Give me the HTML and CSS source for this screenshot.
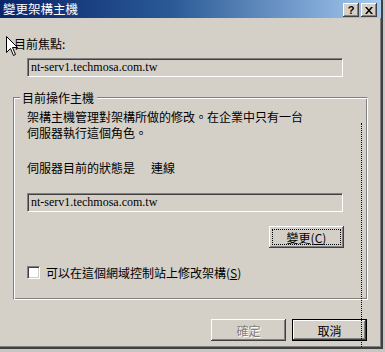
FILE: index.html
```html
<!DOCTYPE html>
<html lang="zh-Hant">
<head>
<meta charset="utf-8">
<link rel="stylesheet" href="styles.css">
</head>
<body>
<div class="window">
  <div class="titlebar">
    <span class="title">變更架構主機</span>
    <div class="tb-buttons">
      <span class="tbtn help">?</span>
      <span class="tbtn close"><svg width="8" height="7" viewBox="0 0 8 7"><path d="M0 0h2l2 2.5L6 0h2L5 3.5 8 7H6L4 4.5 2 7H0l3-3.5z" fill="#000"/></svg></span>
    </div>
  </div>
  <div class="content">
    <div class="label">目前焦點:</div>
    <div class="field">nt-serv1.techmosa.com.tw</div>
    <div class="group">
      <div class="legend">目前操作主機</div>
      <p class="desc">架構主機管理對架構所做的修改。在企業中只有一台<br>伺服器執行這個角色。</p>
      <div class="status"><span class="status-label">伺服器目前的狀態是</span><span>連線</span></div>
      <div class="field">nt-serv1.techmosa.com.tw</div>
      <div class="row-right"><span class="btn focus"><span class="focus-ring">變更(<u>C</u>)</span></span></div>
      <div class="check"><span class="box"></span><span>可以在這個網域控制站上修改架構(<u>S</u>)</span></div>
    </div>
    <div class="actions">
      <span class="btn disabled">確定</span>
      <span class="btn default">取消</span>
    </div>
  </div>
  <div class="dotline"></div>
  <svg class="cursor" width="13" height="20" viewBox="0 0 13 20"><path d="M0.5 0.5V16.5L4.5 12.5L7.5 19.5L9.5 18.5L6.5 11.5H11.5Z" fill="#fff" stroke="#000" stroke-width="1"/></svg>
</div>
</body>
</html>
```
FILE: styles.css
```css
html, body {
  margin: 0;
  padding: 0;
  background: #c8c6c0;
}
body {
  font-family: "Noto Sans CJK TC", "Noto Sans", sans-serif;
  font-size: 12px;
  line-height: 15px;
  color: #000;
}
.window {
  position: relative;
  width: 381px;
  height: 347px;
  background: #d4d0c8;
  border-right: 2px solid #404040;
  border-bottom: 2px solid #404040;
  box-shadow: inset -1px -1px #808080;
  overflow: hidden;
}
.titlebar {
  height: 18px;
  background: linear-gradient(to right, #0a246a 0%, #2a5a96 45%, #a6caf0 100%);
  display: flex;
  align-items: center;
  justify-content: space-between;
  padding: 0 4px 0 3px;
}
.title {
  color: #fff;
  font-size: 12.5px;
  line-height: 14px;
}
.tb-buttons {
  display: flex;
  gap: 2px;
  margin-top: 2px;
}
.tbtn {
  width: 16px;
  height: 14px;
  box-sizing: border-box;
  background: #d4d0c8;
  box-shadow: inset -1px -1px #404040, inset 1px 1px #fff, inset -2px -2px #808080;
  display: flex;
  align-items: center;
  justify-content: center;
  font-family: "Liberation Sans", sans-serif;
  font-weight: bold;
  font-size: 11px;
  line-height: 11px;
}
.content {
  padding: 18px 0 0 0;
}
.label {
  margin-left: 14px;
}
.field {
  margin: 7px 0 0 27px;
  width: 316px;
  height: 19px;
  box-sizing: border-box;
  border: 1px solid;
  border-color: #808080 #fff #fff #808080;
  box-shadow: inset 1px 1px #404040, inset -1px -1px #d4d0c8;
  font-family: "Liberation Serif", serif;
  font-size: 12px;
  line-height: 17px;
  padding-left: 3px;
}
.group {
  position: relative;
  margin: 20px 0 0 13px;
  width: 355px;
  box-sizing: border-box;
  border: 1px solid;
  border-color: #808080 #fff #fff #808080;
  box-shadow: inset 1px 1px #fff, inset -1px -1px #808080;
  padding: 11px 23px 19px 13px;
}
.legend {
  position: absolute;
  top: -8px;
  left: 6px;
  padding: 0 3px 0 2px;
  background: #d4d0c8;
}
.desc {
  margin: 0;
  line-height: 16px;
}
.status {
  margin-top: 19px;
  display: flex;
}
.status-label {
  width: 124px;
}
.group .field {
  margin: 18px 0 0 0;
}
.row-right {
  display: flex;
  justify-content: flex-end;
  margin-top: 14px;
}
.btn {
  width: 75px;
  height: 22px;
  box-sizing: border-box;
  background: #d4d0c8;
  box-shadow: inset -1px -1px #404040, inset 1px 1px #fff, inset -2px -2px #808080;
  display: flex;
  align-items: center;
  justify-content: center;
  font-size: 12px;
}
.btn.focus {
  padding: 3px;
}
.focus-ring {
  flex: 1;
  align-self: stretch;
  border: 1px dotted #000;
  display: flex;
  align-items: center;
  justify-content: center;
}
.check {
  margin-top: 17px;
  display: flex;
  align-items: center;
  gap: 6px;
}
.box {
  width: 13px;
  height: 13px;
  box-sizing: border-box;
  background: #fff;
  border: 1px solid;
  border-color: #808080 #fff #fff #808080;
  box-shadow: inset 1px 1px #404040, inset -1px -1px #d4d0c8;
}
.actions {
  display: flex;
  justify-content: flex-end;
  gap: 6px;
  margin-top: 19px;
  padding-right: 14px;
}
.btn.disabled {
  color: #808080;
  text-shadow: 1px 1px #fff;
}
.btn.default {
  border: 1px solid #000;
}
.dotline {
  position: absolute;
  left: 361px;
  top: 123px;
  height: 240px;
  border-left: 1px dotted #000;
}
.cursor {
  position: absolute;
  left: 6px;
  top: 36px;
}
```
